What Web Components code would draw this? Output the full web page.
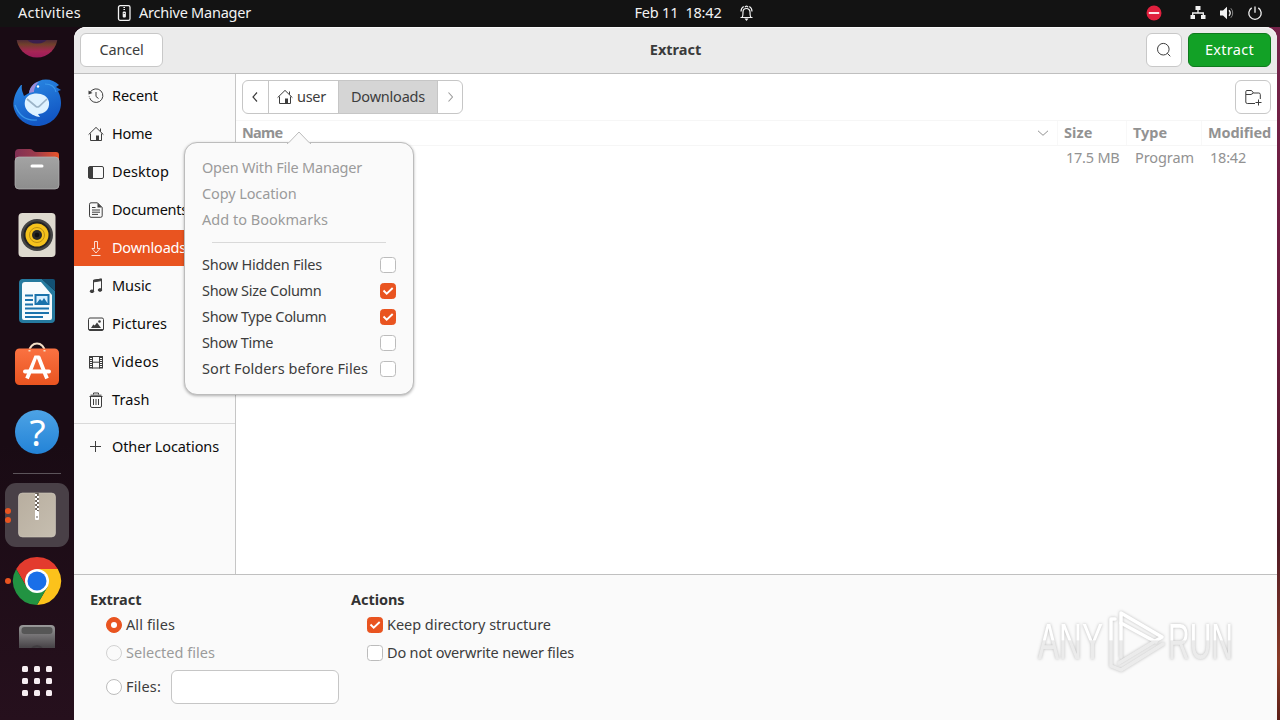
<!DOCTYPE html>
<html lang="en">
<head>
<meta charset="utf-8">
<title>Extract</title>
<style>
    html, body {
        margin: 0;
        height: 100%;
        overflow: hidden;
    }
    body {
        font-family: "Noto Sans", "Open Sans", sans-serif;
        font-size: 14.5px;
        line-height: 18px;
        color: #3d3d3d;
    }
</style>
</head>
<body>
<desktop-shell></desktop-shell>
<script>
/* -------------- Base ------------------- */
class BaseElement extends HTMLElement {
    constructor() {
        super();
        this.attachShadow({ mode: 'open' });
    }
    connectedCallback() {
        this.shadowRoot.innerHTML = `
            <style>
                *, *::before, *::after { box-sizing: border-box; }
                svg { display: block; overflow: visible; }
                ${this.styles()}
            </style>
            ${this.render()}
        `;
        this.ready();
    }
    styles() { return ''; }
    render() { return '<slot></slot>'; }
    ready() {}
    attr(name, def = '') {
        return this.getAttribute(name) || def;
    }
}

/* -------------- Text with a fixed advance width ------------------- */
class FitText extends BaseElement {
    styles() {
        return /* css */ `
            :host { display: flex; flex: none; width: ${this.attr('w')}px; height: 20px; }
            span { flex: none; white-space: pre; }
        `;
    }
    render() {
        return `<span>${this.attr('text')}</span>`;
    }
    ready() {
        const $span = this.shadowRoot.querySelector('span');
        const diff = Number(this.attr('w')) - $span.getBoundingClientRect().width;
        $span.style.letterSpacing = `${(diff / this.attr('text').length).toFixed(3)}px`;
    }
}

/* -------------- Symbolic icons ------------------- */
const ICONS = {
    recent: `<path d="M2.2 4.2A6.8 6.8 0 1 1 1.6 9.8"/><path d="M8 4v4.5l2.5 2"/><path d="M.5 2.5v4l4-1.5z" fill="currentColor" stroke="none"/><path d="M1.2 8.2v.6" />`,
    home: `<path d="M.6 8.6 8 1.4l7.4 7.2M2.5 7.5v7h11v-7M12.5 5.5v-3"/><path d="M8 9.5h3v5H8z" fill="currentColor" stroke="none"/>`,
    desktop: `<rect x=".5" y="2.5" width="15" height="12" rx="1.5"/><path d="M.5 3h3.5v11H.5z" fill="currentColor" stroke="none"/><path d="M4.5 3v11"/>`,
    documents: `<path d="M3 .8h6.5l4.7 4.7v8.3a1.5 1.5 0 0 1-1.5 1.5H3a1.5 1.5 0 0 1-1.5-1.5V2.3A1.5 1.5 0 0 1 3 .8z"/><path d="M9.5 1v4.5H14z" fill="currentColor" stroke="none"/><path d="M4 5.5h3.5M4 8h8M4 10.2h8M4 12.4h6"/>`,
    downloads: `<path d="M6.5 1.5h3v7H12L8 13 4 8.5h2.5zM3.5 15.5h9" stroke-width=".8"/>`,
    music: `<path d="M5.5 13V2.3l8-1.3v10.5"/><path d="M5.5 2.3l8-1.3v1.6l-8 1.3z" fill="currentColor"/><ellipse cx="4" cy="13.3" rx="1.8" ry="1.3" fill="currentColor"/><ellipse cx="12" cy="12" rx="1.8" ry="1.3" fill="currentColor"/>`,
    pictures: `<rect x=".5" y="2" width="15" height="12.5" rx="1.5"/><path d="M3 12 5.3 8.5l1.5 1L9 6.5l4 5.5z" fill="currentColor" stroke="none"/><circle cx="11.5" cy="5.5" r="1.3" fill="currentColor" stroke="none"/><path d="M1 13.5h14"/>`,
    videos: `<path d="M1.5 2v12.5M14.500 2v12.5M4.500 2v12.5M11.500 2v12.5M4.500 8.200h7M2 2.500h12M2 14h12"/><path d="M3 3v11.500M13 3v11.500" stroke-dasharray="1 1" stroke-width="2"/>`,
    trash: `<path d="M2.500 4.500v9.500a1.500 1.500 0 0 0 1.500 1.500h8a1.500 1.500 0 0 0 1.500-1.500V4.500M5.500 7v6M8 7v6M10.500 7v6"/><path d="M1.500 4.500h13M2.500 3.200h11M5.500 2.500V1h5v1.500"/>`,
    plus: `<path d="M7.500 2v11M2 7.500h11"/>`,
    search: `<circle cx="7.300" cy="7.200" r="5.800"/><path d="m11.300 11.300 3 3"/>`,
    left: `<path d="M9 3.500 5 8l4 4.500" stroke-width="1.200"/>`,
    right: `<path d="M6.500 3.500 10.500 8l-4 4.500" stroke-width="1.100"/>`,
    down: `<path d="M3 5.800 8 10.300l5-4.500"/>`,
    newfolder: `<path d="M10 14.500H2.300A1.500 1.500 0 0 1 .8 13V2.700a1.200 1.200 0 0 1 1.200-1.200h4.500l2 2.500h5.300a1.500 1.500 0 0 1 1.500 1.500V10M1 5.500h5L8.500 4"/><path d="M13.500 10.500v6M10.500 13.500h6"/>`,
    archive: `<rect x="2.500" y=".7" width="11.500" height="14.600" rx="1.600" stroke-width="1.300"/><path d="M8.200 2v4" stroke-dasharray="1 1" stroke-width="1.600"/><rect x="6.700" y="6.500" width="3.200" height="6" rx="1" fill="currentColor" stroke="none"/><path d="M8.200 8v1" stroke="#131313"/>`,
    bell: `<path d="M1.500 12.500h12M3 12.500c1-1 1-3 1-5.500a3.500 3.500 0 0 1 7 0c0 2.500 0 4.500 1 5.500M2 6.500c0-2.500 1-4 2.700-5M13 6.500c0-2.500-1-4-2.700-5M6 2.300C6.500.8 8.500.8 9 2.300" stroke-width="1.200"/><path d="M5.500 13.600h4l-2 2.400z" fill="currentColor" stroke="none"/>`,
    network: `<path d="M5.500 1h5v4h-5zM.5 10h4.500v4H.5zM11 10h4.500v4H11z" fill="currentColor" stroke="none"/><path d="M8 5v3M2.700 10V8h10.600v2" stroke-width="1.300"/>`,
    volume: `<path d="M1 5.500h3L8 1.800v12.400L4 10.500H1z" fill="currentColor" stroke="none"/><path d="M10 5.300a4 4 0 0 1 0 5.400" stroke-width="1.300"/><path d="M11.800 3.200a7 7 0 0 1 0 9.600" opacity=".5"/>`,
    power: `<path d="M4.700 2.900a6.200 6.200 0 1 0 6.600 0M8 1.500v6.300" stroke-width="1.300"/>`,
    dnd: `<circle cx="8" cy="8" r="7.500" fill="#e0203e" stroke="none"/><path d="M2.800 8h10.400" stroke="#fff" stroke-width="1.800"/>`
};

class UiIcon extends BaseElement {
    styles() {
        return `:host { display: block; flex: none; width: 16px; height: 16px; }`;
    }
    render() {
        return `<svg width="16" height="16" viewBox="0 0 16 16" fill="none" stroke="currentColor">${ICONS[this.attr('name')]}</svg>`;
    }
}

/* -------------- Top bar ------------------- */
class TopBar extends BaseElement {
    styles() {
        return /* css */ `
            :host {
                display: grid;
                grid-template-columns: 1fr auto 1fr;
                align-items: center;
                box-sizing: border-box;
                height: 27px;
                padding-bottom: 1px;
                background: #131313;
                color: #f2f2f2;
            }
            div { display: flex; align-items: center; }
            .start { padding-left: 18px; }
            .app { margin: 0 7px 0 35px; }
            .center { gap: 17px; padding-left: 109px; }
            .end { justify-content: flex-end; padding-right: 17px; }
            .end .net { margin: 0 13px 0 28px; }
            .end .vol { margin-right: 12px; }
        `;
    }
    render() {
        return `
            <div class="start">
                <fit-text text="Activities" w="63"></fit-text>
                <ui-icon class="app" name="archive"></ui-icon>
                <fit-text text="Archive Manager" w="112"></fit-text>
            </div>
            <div class="center">
                <fit-text text="Feb 11  18:42" w="87"></fit-text>
                <ui-icon name="bell"></ui-icon>
            </div>
            <div class="end">
                <ui-icon name="dnd"></ui-icon>
                <ui-icon class="net" name="network"></ui-icon>
                <ui-icon class="vol" name="volume"></ui-icon>
                <ui-icon name="power"></ui-icon>
            </div>
        `;
    }
}

/* -------------- Dock ------------------- */
const APPS = {
    firefox: `<defs><linearGradient id="g" x2="0" y2="1"><stop offset=".5" stop-color="#3a1c40"/><stop offset=".68" stop-color="#70402b"/><stop offset=".85" stop-color="#a62555"/><stop offset="1" stop-color="#9b1b5b"/></linearGradient></defs>
        <circle cx="24" cy="24" r="20.5" fill="url(#g)"/><ellipse cx="24" cy="25" rx="10" ry="5.5" fill="#3a1f4d"/>`,
    thunderbird: `<defs><linearGradient id="g" x2=".4" y2="1"><stop offset="0" stop-color="#2c8de6"/><stop offset="1" stop-color="#1257c4"/></linearGradient></defs>
        <path d="M8 6C2 13-1 23 1 30c3 10 12 17 23 17 13 0 24-10 24-23 0-6-2-10-3-12l3-1-5-3 3-2C41 1 33-1 26 2 20 4 17 9 16 14l-5 3C10 14 8 10 9 6z" fill="url(#g)"/>
        <path d="M2 26c4 11 12 16 22 15M32 5c6 0 10 3 11 8" fill="none" stroke="#3a98ea" stroke-width="1.2"/>
        <path d="M16 14c1-7 6-11 10-11-4 3-5 8-5 10z" fill="#9b8bd9"/>
        <circle cx="25" cy="7.5" r="1.2" fill="#fff"/>
        <path d="M12 22c2-10 22-10 24 1 1 8-5 12-11 12l2 3c-8-1-17-7-15-16z" fill="#dff2ff"/>
        <path d="m14 20 9 7.5q1.5 1 3 0l8-7.5" fill="none" stroke="#9cb4c8" stroke-width="1.7"/>`,
    files: `<defs><linearGradient id="t"><stop offset="0" stop-color="#803054"/><stop offset=".45" stop-color="#9a3a4c"/><stop offset="1" stop-color="#e9552a"/></linearGradient><linearGradient id="g" x2="0" y2="1"><stop offset="0" stop-color="#a3a3a3"/><stop offset="1" stop-color="#8d8d8d"/></linearGradient></defs>
        <path d="M2 8a4 4 0 0 1 4-4h11c3 0 3 3 6 3h20a3 3 0 0 1 3 3v14H2z" fill="url(#t)"/>
        <rect x="2" y="12" width="44" height="32" rx="4" fill="url(#g)" stroke="#b6b6b6" stroke-width=".7"/>
        <rect x="17.5" y="19.5" width="13" height="3" rx="1.5" fill="#fff"/>`,
    rhythmbox: `<rect x="5.5" y="2" width="37" height="44" rx="4" fill="#dedacf"/><circle cx="24" cy="24" r="16" fill="#444"/><circle cx="24" cy="24" r="13.5" fill="#242424"/><circle cx="24" cy="24" r="11.5" fill="#f5c21c"/><circle cx="24" cy="24" r="7.5" fill="none" stroke="#bd9114"/><circle cx="24" cy="24" r="5" fill="#282828"/><circle cx="24" cy="24" r="2.3" fill="#101010"/>`,
    writer: `<path d="M9 2h20l13 12v28a4 4 0 0 1-4 4H10a4 4 0 0 1-4-4V6a4 4 0 0 1 3-4z" fill="#257a9f"/><path d="M29 2h11a2 2 0 0 1 2 2v10z" fill="#135174"/><path d="M12 5h16l11 13v23a2 2 0 0 1-2 2H11a2 2 0 0 1-2-2V8a3 3 0 0 1 3-3z" fill="#f7fbfd"/>
        <path d="M12 18.5h8M12 23h8M12 27.5h8M12 31.5h24M12 36h24M12 40h18" stroke="#1b73ac" stroke-width="2"/><rect x="22.5" y="18" width="13" height="9" fill="#d7efff" stroke="#1b73ac" stroke-width="2"/><path d="m23 27 4-5 2 2 2-3 4 6z" fill="#1b73ac"/>`,
    software: `<defs><linearGradient id="g" x2="0" y2="1"><stop offset="0" stop-color="#fa7242"/><stop offset="1" stop-color="#e95420"/></linearGradient></defs>
        <path d="M16.5 8a7.5 7.5 0 0 1 15 0" fill="none" stroke="#f4dfc7" stroke-width="2"/><rect x="2" y="5.5" width="44" height="36.5" rx="4.5" fill="url(#g)"/><path d="M16.5 8.5V7M31.5 8.5V7" fill="none" stroke="#f4dfc7" stroke-width="2"/>
        <path d="M21.5 12.5h5l2 5.5h-2.800L24 15l-4.500 12H15.500z" fill="#fff"/><rect x="10" y="26.5" width="28" height="4" rx="2" fill="#fff"/><path d="m25.5 14 5.5 14M16.500 29.500 14 35.500M31.500 29.500l2.500 6" stroke="#fff" stroke-width="3.8"/>`,
    help: `<defs><linearGradient id="g" x2="0" y2="1"><stop offset="0" stop-color="#4da3e5"/><stop offset="1" stop-color="#2383d7"/></linearGradient></defs>
        <circle cx="24" cy="23" r="22" fill="url(#g)"/><text x="24.5" y="36.5" text-anchor="middle" font-size="37" font-family="Noto Sans" fill="#fff">?</text>`,
    archive: `<defs><linearGradient id="g" x2="1" y2="1"><stop offset="0" stop-color="#b8ae9f"/><stop offset="1" stop-color="#c6beb0"/></linearGradient></defs>
        <rect x="5.5" y="2" width="37" height="44" rx="4" fill="url(#g)" stroke="#d0c9be" stroke-width=".6"/><path d="M24 2v19" stroke="#675f56" stroke-width="3.5"/><path d="M23 3v18" stroke="#fff" stroke-width="2" stroke-dasharray="2 2"/><path d="M25 5v17" stroke="#fff" stroke-width="2" stroke-dasharray="2 2"/><rect x="22" y="20" width="4" height="9" rx="1" fill="#fff"/><path d="M24 25v2" stroke="#675f56"/>`,
    chrome: `<path d="M3.200 12A24 24 0 0 1 44.800 12H24L13.600 30z" fill="#e33b2e"/><path d="M44.800 12A24 24 0 0 1 24 48l10.400-18L24 12z" fill="#fcc21b"/><path d="M24 48A24 24 0 0 1 3.200 12l10.400 18H34.400z" fill="#229342"/><circle cx="24" cy="24" r="12" fill="#fff"/><circle cx="24" cy="24" r="9.5" fill="#1a6fe8"/>`,
    drive: `<defs><linearGradient id="g" x2="0" y2="1"><stop offset="0" stop-color="#9a9a9a"/><stop offset=".5" stop-color="#4a464a"/></linearGradient></defs>
        <rect x="6" y="2" width="36" height="44" rx="4" fill="url(#g)"/><rect x="8.5" y="4" width="31" height="7" rx="3" fill="#565656"/><path d="M19 25c3-2 7-2 10 0" stroke="#403c40" fill="none" stroke-width="2"/>`
};

class DockItem extends BaseElement {
    styles() {
        return /* css */ `
            :host {
                display: grid;
                grid-template-columns: 5px 64px;
                align-items: center;
                flex: none;
                height: 66px;
            }
            .tile {
                display: grid;
                place-items: center;
                height: 64px;
                border-radius: 11px;
                grid-area: 1 / 2;
                ${this.hasAttribute('active') ? 'background: #494047;' : ''}
            }
            .dots {
                display: grid;
                gap: 3px;
                grid-area: 1 / 2;
                justify-self: start;
                z-index: 1;
            }
            .dots i { width: 6px; height: 6px; border-radius: 50%; background: #e95420; }
        `;
    }
    render() {
        return `
            <div class="dots">${'<i></i>'.repeat(Number(this.attr('dots', '0')))}</div>
            <div class="tile"><svg width="48" height="48" viewBox="0 0 48 48">${APPS[this.attr('app')]}</svg></div>
        `;
    }
}

class AppDock extends BaseElement {
    styles() {
        return /* css */ `
            :host {
                display: flex;
                flex-direction: column;
                width: 74px;
                padding-top: 13px;
                box-sizing: border-box;
                background: linear-gradient(#190b14, #190b14 60%, #26101d);
            }
            .apps { display: flex; flex-direction: column; flex: none; height: 608px; overflow: hidden; }
            .apps dock-item:first-child { margin-top: -36px; }
            hr { flex: none; width: 48px; height: 1px; margin: 7px 13px 8px; border: 0; background: #5c545a; }
            .grid {
                display: grid;
                grid-template-columns: repeat(3, 6px);
                gap: 6px;
                margin: 18px 0 0 22px;
            }
            .grid i { height: 6px; border-radius: 1.5px; background: #f7eef2; }
        `;
    }
    render() {
        return `
            <div class="apps">
                <dock-item app="firefox"></dock-item>
                <dock-item app="thunderbird"></dock-item>
                <dock-item app="files"></dock-item>
                <dock-item app="rhythmbox"></dock-item>
                <dock-item app="writer"></dock-item>
                <dock-item app="software"></dock-item>
                <dock-item app="help"></dock-item>
                <hr>
                <dock-item app="archive" dots="2" active></dock-item>
                <dock-item app="chrome" dots="1"></dock-item>
                <dock-item app="drive"></dock-item>
            </div>
            <div class="grid">${'<i></i>'.repeat(9)}</div>
        `;
    }
}

/* -------------- Controls ------------------- */
class UiButton extends BaseElement {
    styles() {
        return /* css */ `
            :host {
                box-sizing: border-box;
                display: flex;
                align-items: center;
                justify-content: center;
                flex: none;
                height: 34px;
                width: 36px;
                border: 1px solid #c8c8c8;
                border-radius: 6px;
                background: #fff;
            }
            :host([primary]) { background: #12a126; border-color: #0e7a1d; color: #fff; }
        `;
    }
}

class UiCheck extends BaseElement {
    styles() {
        return /* css */ `
            :host { display: block; flex: none; width: 16px; height: 16px; }
            i {
                display: block;
                width: 16px;
                height: 16px;
                border: 1px solid #bcbcbc;
                border-radius: 3.5px;
                background: #fff;
            }
            :host([radio]) i { border-radius: 50%; }
            :host([off]) i { border-color: #d2d2d2; background: #fafafa; }
            :host([checked]) i { border-color: #e95420; background: #e95420; }
            :host([radio][checked]) i { padding: 4px; }
            :host([radio][checked]) i::after { content: ""; display: block; height: 6px; width: 6px; border-radius: 50%; background: #fff; }
        `;
    }
    render() {
        const tick = this.hasAttribute('checked') && !this.hasAttribute('radio');
        return `<i>${tick ? '<svg width="14" height="14"><path d="m2.500 6.500 3.200 3.200 6-5.700" fill="none" stroke="#fff" stroke-width="1.900"/></svg>' : ''}</i>`;
    }
}

/* -------------- Places sidebar ------------------- */
class PlaceRow extends BaseElement {
    styles() {
        return /* css */ `
            :host {
                display: flex;
                align-items: center;
                gap: 8px;
                height: 36px;
                margin-bottom: 2px;
                padding-left: 14px;
                color: #3d3d3d;
            }
            fit-text { color: #0c0c0c; }
            :host([selected]) { background: #e95420; color: #fff; }
            :host([selected]) fit-text { color: #fff; }
        `;
    }
    render() {
        return `
            <ui-icon name="${this.attr('icon')}"></ui-icon>
            <fit-text text="${this.attr('text')}" w="${this.attr('w')}"></fit-text>
        `;
    }
}

class PlacesSidebar extends BaseElement {
    styles() {
        return /* css */ `
            :host {
                box-sizing: border-box;
                display: block;
                width: 162px;
                padding-top: 4px;
                border-right: 1px solid #c6c6c6;
                background: #fafafa;
            }
            hr { height: 1px; margin: 5px 0; border: 0; background: #d9d9d9; }
        `;
    }
    render() {
        return `
            <place-row icon="recent" text="Recent" w="46"></place-row>
            <place-row icon="home" text="Home" w="40"></place-row>
            <place-row icon="desktop" text="Desktop" w="57"></place-row>
            <place-row icon="documents" text="Documents" w="76"></place-row>
            <place-row icon="downloads" text="Downloads" w="74" selected></place-row>
            <place-row icon="music" text="Music" w="39.5"></place-row>
            <place-row icon="pictures" text="Pictures" w="55"></place-row>
            <place-row icon="videos" text="Videos" w="47"></place-row>
            <place-row icon="trash" text="Trash" w="37.5"></place-row>
            <hr>
            <place-row icon="plus" text="Other Locations" w="107"></place-row>
        `;
    }
}

/* -------------- File list ------------------- */
class FileBrowser extends BaseElement {
    styles() {
        return /* css */ `
            :host { display: flex; flex-direction: column; flex: 1; background: #fff; }
            .bar { display: flex; justify-content: space-between; padding: 6px; }
            .path {
                display: flex;
                width: 221px;
                height: 34px;
                border: 1px solid #c6c6c6;
                border-radius: 6px;
                overflow: hidden;
            }
            .path > div { display: flex; align-items: center; justify-content: center; border-left: 1px solid #c6c6c6; }
            .path > div:first-child { border-left: 0; width: 25px; }
            .path .user { width: 70px; gap: 4px; padding-right: 4px; }
            .path .here { width: 99px; background: #d5d5d5; }
            .path .next { flex: 1; color: #9b9b9b; }
            .row { display: grid; grid-template-columns: 822px 69px 75px 1fr; height: 26px; align-items: center; color: #929292; }
            .head { font-weight: 700; border: solid #f6f6f6; border-width: 1px 0; }
            .head > div { display: flex; align-items: center; justify-content: space-between; height: 24px; padding-left: 6px; border-right: 1px solid #f8f8f8; }
            .head > div:last-child { border: 0; }
            .head ui-icon { margin-right: 6px; }
            .file { height: 24px; }
            .file > div { padding-left: 8px; }
        `;
    }
    render() {
        return `
            <div class="bar">
                <div class="path">
                    <div><ui-icon name="left"></ui-icon></div>
                    <div class="user"><ui-icon name="home"></ui-icon><fit-text text="user" w="29"></fit-text></div>
                    <div class="here"><fit-text text="Downloads" w="74"></fit-text></div>
                    <div class="next"><ui-icon name="right"></ui-icon></div>
                </div>
                <ui-button><ui-icon name="newfolder"></ui-icon></ui-button>
            </div>
            <div class="row head">
                <div><fit-text text="Name" w="40.5"></fit-text><ui-icon name="down"></ui-icon></div>
                <div><fit-text text="Size" w="28.5"></fit-text></div>
                <div><fit-text text="Type" w="34"></fit-text></div>
                <div><fit-text text="Modified" w="63"></fit-text></div>
            </div>
            <div class="row file">
                <div></div>
                <div><fit-text text="17.5 MB" w="53.5"></fit-text></div>
                <div><fit-text text="Program" w="59"></fit-text></div>
                <div><fit-text text="18:42" w="36"></fit-text></div>
            </div>
        `;
    }
}

/* -------------- Column menu ------------------- */
class MenuItem extends BaseElement {
    styles() {
        return /* css */ `
            :host { display: flex; align-items: center; justify-content: space-between; height: 26px; }
            :host([off]) { color: #9b9b9b; }
        `;
    }
    render() {
        const check = this.hasAttribute('check')
            ? `<ui-check ${this.attr('check') === 'on' ? 'checked' : ''}></ui-check>`
            : '';
        return `<fit-text text="${this.attr('text')}" w="${this.attr('w')}"></fit-text>${check}`;
    }
}

class ColumnMenu extends BaseElement {
    styles() {
        return /* css */ `
            :host {
                box-sizing: border-box;
                display: block;
                width: 230px;
                height: 253px;
                padding: 12px 17px;
                border: 1px solid #bcbcbc;
                border-radius: 13px;
                background: #fafafa;
                box-shadow: 0 1px 3px rgba(0, 0, 0, .3);
            }
            .arrow { position: absolute; left: 102px; top: -12px; }
            hr { height: 1px; margin: 9px 10px; border: 0; background: #d9d9d9; }
        `;
    }
    render() {
        return `
            <svg class="arrow" width="24" height="13"><path d="M0 12.5h1L12 1l11 11.5h1" fill="#fafafa" stroke="#bcbcbc"/><path d="M1.5 12.5h21" stroke="#fafafa" stroke-width="1.5"/></svg>
            <menu-item off text="Open With File Manager" w="160"></menu-item>
            <menu-item off text="Copy Location" w="94.5"></menu-item>
            <menu-item off text="Add to Bookmarks" w="126"></menu-item>
            <hr>
            <menu-item text="Show Hidden Files" w="120" check></menu-item>
            <menu-item text="Show Size Column" w="119.5" check="on"></menu-item>
            <menu-item text="Show Type Column" w="124.5" check="on"></menu-item>
            <menu-item text="Show Time" w="71" check></menu-item>
            <menu-item text="Sort Folders before Files" w="166" check></menu-item>
        `;
    }
}

/* -------------- Extract options ------------------- */
class ExtractOptions extends BaseElement {
    styles() {
        return /* css */ `
            :host {
                box-sizing: border-box;
                display: flex;
                height: 146px;
                padding: 15px 44px 0 16px;
                border-top: 1px solid #c0c0c0;
                background: #fafafa;
            }
            .col { width: 261px; }
            .title { font-weight: 700; color: #333; }
            .opt { display: flex; align-items: center; gap: 4px; height: 28px; padding-left: 16px; }
            .title + .opt { margin-top: 1px; }
            .off { color: #9b9b9b; }
            .files { height: 34px; margin-top: 3px; }
            .entry { width: 168px; height: 34px; margin-left: 6px; border: 1px solid #c6c6c6; border-radius: 6px; background: #fff; }
            .mark { margin: 18px 0 0 auto; filter: drop-shadow(0 0 1.5px rgba(0, 0, 0, .25)); }
        `;
    }
    render() {
        return `
            <div class="col">
                <fit-text class="title" text="Extract" w="51.5"></fit-text>
                <div class="opt"><ui-check radio checked></ui-check><fit-text text="All files" w="49"></fit-text></div>
                <div class="opt off"><ui-check radio off></ui-check><fit-text text="Selected files" w="89"></fit-text></div>
                <div class="opt files"><ui-check radio></ui-check><fit-text text="Files:" w="35"></fit-text><div class="entry"></div></div>
            </div>
            <div class="col">
                <fit-text class="title" text="Actions" w="53.5"></fit-text>
                <div class="opt"><ui-check checked></ui-check><fit-text text="Keep directory structure" w="164"></fit-text></div>
                <div class="opt"><ui-check></ui-check><fit-text text="Do not overwrite newer files" w="187"></fit-text></div>
            </div>
            <svg class="mark" width="196" height="66" viewBox="0 0 196 66">
                <defs><linearGradient id="w" gradientUnits="userSpaceOnUse" x2="0" y2="66"><stop offset=".48" stop-color="#fff"/><stop offset=".5" stop-color="#ebebeb"/></linearGradient></defs>
                <g font-family="Liberation Sans Narrow, Liberation Sans" font-size="50" fill="url(#w)">
                    <text x="1" y="51" textLength="65" lengthAdjust="spacingAndGlyphs">ANY</text>
                    <text x="131" y="51" textLength="65" lengthAdjust="spacingAndGlyphs">RUN</text>
                </g>
                <g fill="none" stroke="url(#w)" stroke-width="3.5" stroke-linejoin="round" stroke-linecap="round">
                    <path d="M84 49V5l41 24-43 26"/>
                    <path d="M84 15l35 19M78 11h-4v47l10 4 42-26"/>
                </g>
            </svg>
        `;
    }
}

/* -------------- Dialog window ------------------- */
class ExtractDialog extends BaseElement {
    styles() {
        return /* css */ `
            :host {
                position: relative;
                display: flex;
                flex-direction: column;
                border-radius: 12px 12px 0 0;
                background: #fafafa;
            }
            header {
                display: grid;
                grid-template-columns: 1fr auto 1fr;
                align-items: center;
                flex: none;
                height: 47px;
                padding: 0 6px;
                border-bottom: 1px solid #bfbfbf;
                border-radius: 12px 12px 0 0;
                background: #ebebeb;
                box-shadow: inset 0 1px #f8f8f8;
            }
            header b { color: #3a3a3a; }
            .cancel { width: 83px; }
            .actions { display: flex; justify-content: flex-end; gap: 6px; }
            .extract { width: 83px; }
            main { display: flex; flex: 1; min-height: 0; }
            column-menu { position: absolute; left: 110px; top: 115px; }
        `;
    }
    render() {
        return `
            <header>
                <ui-button class="cancel"><fit-text text="Cancel" w="44"></fit-text></ui-button>
                <b><fit-text text="Extract" w="51.5"></fit-text></b>
                <div class="actions">
                    <ui-button><ui-icon name="search"></ui-icon></ui-button>
                    <ui-button class="extract" primary><fit-text text="Extract" w="49"></fit-text></ui-button>
                </div>
            </header>
            <main>
                <places-sidebar></places-sidebar>
                <file-browser></file-browser>
            </main>
            <extract-options></extract-options>
            <column-menu></column-menu>
        `;
    }
}

class DesktopShell extends BaseElement {
    styles() {
        return /* css */ `
            :host {
                display: grid;
                grid-template: 27px 693px / 74px 1203px 3px;
                width: 1280px;
                height: 720px;
                background: linear-gradient(90deg, #190b14 92px, transparent 92px), linear-gradient(#75234a, #6b1b3d 45%, #4f1a25 75%, #8a3a26 92%, #5c2018);
            }
            top-bar { grid-column: 1 / -1; }
        `;
    }
    render() {
        return `
            <top-bar></top-bar>
            <app-dock></app-dock>
            <extract-dialog></extract-dialog>
        `;
    }
}

customElements.define('fit-text', FitText);
customElements.define('ui-icon', UiIcon);
customElements.define('ui-button', UiButton);
customElements.define('ui-check', UiCheck);
customElements.define('top-bar', TopBar);
customElements.define('dock-item', DockItem);
customElements.define('app-dock', AppDock);
customElements.define('place-row', PlaceRow);
customElements.define('places-sidebar', PlacesSidebar);
customElements.define('file-browser', FileBrowser);
customElements.define('menu-item', MenuItem);
customElements.define('column-menu', ColumnMenu);
customElements.define('extract-options', ExtractOptions);
customElements.define('extract-dialog', ExtractDialog);
customElements.define('desktop-shell', DesktopShell);
</script>
</body>
</html>
